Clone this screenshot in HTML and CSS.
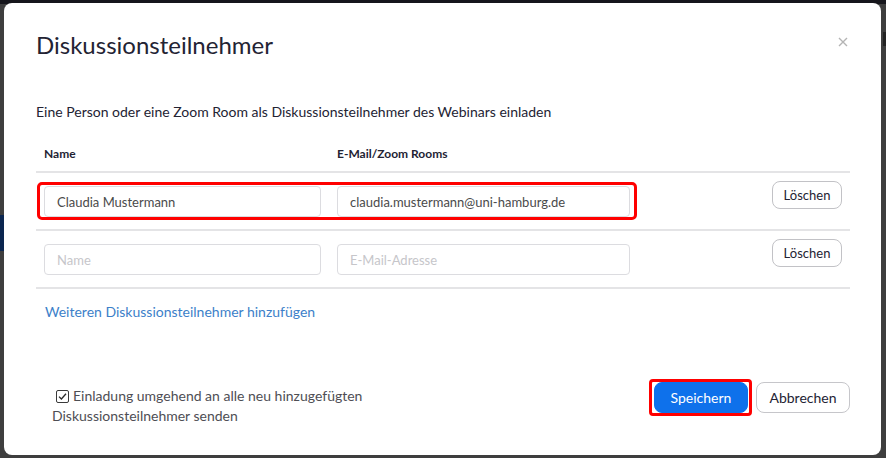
FILE: index.html
```html
<!DOCTYPE html>
<html lang="de">
<head>
<meta charset="utf-8">
<title>Diskussionsteilnehmer</title>
<link rel="stylesheet" href="styles.css">
</head>
<body>
<div class="backdrop">
  <div class="bd-top"></div>
  <div class="bd-blue"></div>
  <div class="bd-right"></div>
</div>
<div class="modal">
  <div class="modal-header">
    <h1 class="title">Diskussionsteilnehmer</h1>
    <svg class="close" width="10" height="10" viewBox="0 0 10 10"><path d="M1 1L9 9M9 1L1 9" stroke="#b4b4b4" stroke-width="1.4" fill="none"/></svg>
  </div>
  <p class="desc">Eine Person oder eine Zoom Room als Diskussionsteilnehmer des Webinars einladen</p>
  <div class="table">
    <div class="row head">
      <span class="th">Name</span>
      <span class="th">E-Mail/Zoom Rooms</span>
      <span></span>
    </div>
    <div class="row">
      <div class="field"><span class="value">Claudia Mustermann</span></div>
      <div class="field"><span class="value">claudia.mustermann@uni-hamburg.de</span></div>
      <button class="btn-del">Löschen</button>
      <div class="mark mark-row"></div>
    </div>
    <div class="row">
      <div class="field"><span class="ph">Name</span></div>
      <div class="field"><span class="ph">E-Mail-Adresse</span></div>
      <button class="btn-del">Löschen</button>
    </div>
  </div>
  <a class="add-link">Weiteren Diskussionsteilnehmer hinzufügen</a>
  <div class="footer">
    <div class="invite">
      <svg class="cb" width="13" height="13" viewBox="0 0 13 13"><rect x="0.5" y="0.5" width="12" height="12" rx="1.5" fill="#fff" stroke="#3a3a3a"/><path d="M3 6.6L5.4 9L10 3.8" stroke="#2a2a2a" stroke-width="1.3" fill="none"/></svg><span class="invite-text">Einladung umgehend an alle neu hinzugefügten Diskussionsteilnehmer senden</span>
    </div>
    <div class="actions">
      <span class="save-wrap"><button class="btn-primary">Speichern</button></span>
      <button class="btn-default">Abbrechen</button>
    </div>
  </div>
</div>
</body>
</html>
```

FILE: styles.css
```css
html, body {
  margin: 0;
  padding: 0;
}
body {
  background: #3e3e3e;
  font-family: Lato, "Open Sans", sans-serif;
  width: 886px;
  height: 458px;
  overflow: hidden;
  position: relative;
  padding-top: 3px;
  padding-left: 4px;
  box-sizing: border-box;
}
.backdrop .bd-top {
  position: absolute;
  left: 0; top: 0;
  width: 886px; height: 4px;
  background: #16161c;
}
.backdrop .bd-blue {
  position: absolute;
  left: 0; top: 215px;
  width: 6px; height: 36px;
  background: #0b2650;
}
.backdrop .bd-right {
  position: absolute;
  right: 0; top: 32px;
  width: 3px; height: 14px;
  background: #232323;
}
.modal {
  position: relative;
  width: 877px;
  height: 452px;
  background: #fff;
  border-radius: 8px;
  box-sizing: border-box;
  padding: 27px 31px 0 32px;
}
.modal-header {
  display: flex;
  justify-content: space-between;
  align-items: flex-start;
}
.title {
  margin: 0;
  font-size: 24px;
  line-height: 29px;
  font-weight: 400;
  color: #232333;
}
.close {
  margin-top: 7px;
  margin-right: 2px;
}
.desc {
  margin: 43px 0 0;
  font-size: 14px;
  line-height: 20px;
  color: #232333;
}
.table {
  margin-top: 24px;
}
.row {
  position: relative;
  display: grid;
  grid-template-columns: 277px 293px 1fr;
  column-gap: 16px;
  align-items: start;
  padding: 8px 8px 12px;
  border-bottom: 2px solid #e4e4e6;
}
.row.head {
  padding: 0 8px 9px;
}
.th {
  font-size: 12px;
  line-height: 16px;
  font-weight: 700;
  color: #232333;
}
.field {
  margin-top: 5px;
  height: 31px;
  box-sizing: border-box;
  border: 1px solid #dcdce0;
  border-radius: 4px;
  padding: 0 12px;
  display: flex;
  align-items: center;
  font-size: 13px;
}
.value {
  color: #4a4a4a;
}
.ph {
  color: #c6c6ca;
}
.btn-del {
  justify-self: end;
  width: 70px;
  height: 28px;
  border: 1px solid #c2c2c6;
  border-radius: 8px;
  background: #fff;
  font-family: Lato, "Open Sans", sans-serif;
  font-size: 13px;
  color: #232333;
  padding: 0;
}
.mark {
  position: absolute;
  border: 3px solid #f00;
  border-radius: 5px;
  pointer-events: none;
}
.mark-row {
  left: 1px;
  top: 9px;
  width: 600px;
  height: 38px;
  box-sizing: border-box;
}
.add-link {
  display: block;
  margin-top: 13px;
  padding-left: 9px;
  font-size: 14px;
  line-height: 20px;
  color: #3c7fc9;
}
.footer {
  margin-top: 60px;
  display: flex;
  justify-content: space-between;
  align-items: flex-start;
}
.invite {
  margin-top: 4px;
  padding-left: 16px;
  width: 320px;
  font-size: 14px;
  line-height: 20px;
  color: #4e4e54;
}
.cb {
  margin-left: 4px;
  margin-right: 4px;
  vertical-align: -2px;
}
.actions {
  display: flex;
  gap: 8px;
}
.save-wrap {
  position: relative;
  display: inline-block;
}
.save-wrap::after {
  content: "";
  position: absolute;
  left: -5px;
  right: -4px;
  top: -3px;
  bottom: -3px;
  border: 3px solid #f00;
  border-radius: 4px;
}
.btn-primary,
.btn-default {
  width: 94px;
  height: 31px;
  border-radius: 8px;
  font-family: Lato, "Open Sans", sans-serif;
  font-size: 14px;
  padding: 0;
  display: block;
}
.btn-primary {
  background: #0e71eb;
  border: 1px solid #0e71eb;
  color: #fff;
}
.btn-default {
  background: #fff;
  border: 1px solid #c6c6ca;
  color: #232333;
}
```
